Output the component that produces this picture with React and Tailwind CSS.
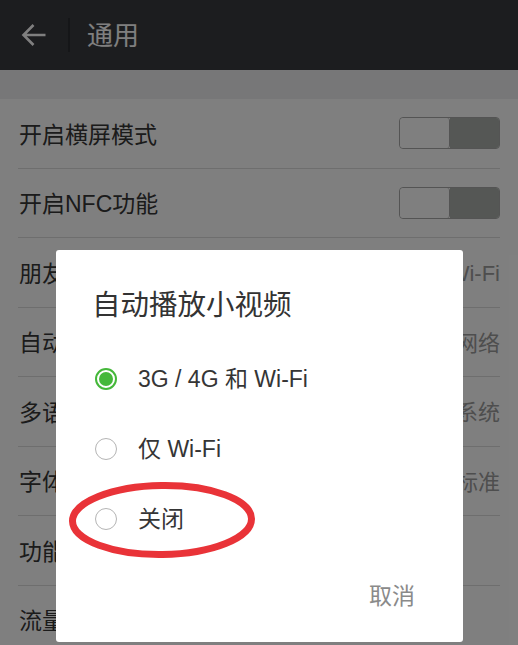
import React from 'react';

const rows = [
    { label: '开启横屏模式', toggle: true },
    { label: '开启NFC功能', toggle: true },
    { label: '朋友圈小视频', value: '3G / 4G 和 Wi-Fi' },
    { label: '自动下载微信安装包', value: '仅Wi-Fi网络' },
    { label: '多语言', value: '跟随系统' },
    { label: '字体大小', value: '标准' },
    { label: '功能', value: '' },
    { label: '流量统计', value: '' },
];

const options = [
    { label: '3G / 4G 和 Wi-Fi', checked: true },
    { label: '仅 Wi-Fi', checked: false },
    { label: '关闭', checked: false },
];

function Toggle() {
    return (
        <div className="flex w-[101px] h-[32px] rounded-[4px] border-[1.5px] border-[#a8a8a8] overflow-hidden">
            <div className="w-[50px] h-full bg-white rounded-[3px] border-r-[1.5px] border-[#a8a8a8]" />
            <div className="flex-1 h-full bg-[#aaafab]" />
        </div>
    );
}

function Radio({ checked }) {
    if (checked) {
        return (
            <div className="w-[22px] h-[22px] rounded-full border-2 border-[#45b83a] flex items-center justify-center">
                <div className="w-[14px] h-[14px] rounded-full bg-[#45b83a]" />
            </div>
        );
    }
    return <div className="w-[22px] h-[22px] rounded-full border-[1.5px] border-[#b4b4b4]" />;
}

export default function App() {
    return (
        <div className="relative w-[518px] h-[645px] overflow-hidden bg-white font-['Liberation_Sans','Noto_Sans_CJK_SC',sans-serif]">
            {/* page under the dialog */}
            <div className="flex items-center h-[70px] bg-[#393a3f]">
                <svg width="26" height="24" viewBox="0 0 26 24" className="ml-[21px]">
                    <path d="M2.5 12H24.5M12.5 2L2.5 12L12.5 22" fill="none" stroke="#ffffff" strokeWidth="2.6" />
                </svg>
                <div className="ml-[21px] w-[2px] h-[34px] bg-[#2b2c30]" />
                <span className="ml-[17px] pt-[2px] text-[26px] leading-none text-white">通用</span>
            </div>
            <div className="h-[29px] bg-[#efeff1]" />
            <div className="flex flex-col">
                {rows.map((row) => (
                    <div key={row.label} className="mx-[18px] h-[69.5px] flex items-center justify-between border-b border-[#dcdcdc]">
                        <span className="ml-[1px] pt-[4px] text-[23px] leading-none text-[#363636]">{row.label}</span>
                        {row.toggle ? <Toggle /> : <span className="pt-[4px] text-[22px] leading-none text-[#9c9c9c]">{row.value}</span>}
                    </div>
                ))}
            </div>

            {/* dim layer */}
            <div className="absolute inset-0 bg-black/50" />

            {/* dialog */}
            <div className="absolute left-[56px] top-[250px] w-[407px] h-[392px] bg-white rounded-[3px] pt-[41px]">
                <div className="pl-[36px] text-[28.5px] leading-none text-[#333333]">自动播放小视频</div>
                <div className="mt-[24px] flex flex-col">
                    {options.map((opt) => (
                        <div key={opt.label} className="h-[70px] flex items-center pl-[39px] gap-[21px]">
                            <Radio checked={opt.checked} />
                            <span className="pt-[1px] text-[23px] leading-none text-[#353535]">{opt.label}</span>
                        </div>
                    ))}
                </div>
                <div className="mt-[28px] flex justify-end pr-[48px]">
                    <span className="text-[23px] leading-[28px] text-[#8a8a8a]">取消</span>
                </div>
            </div>

            {/* red marker round the last option */}
            <svg className="absolute left-[66px] top-[480px]" width="195" height="82" viewBox="0 0 195 82">
                <ellipse cx="96" cy="40" rx="89.5" ry="34.5" fill="none" stroke="#e93338" strokeWidth="7" transform="rotate(-0.8 96 40)" />
            </svg>
        </div>
    );
}
